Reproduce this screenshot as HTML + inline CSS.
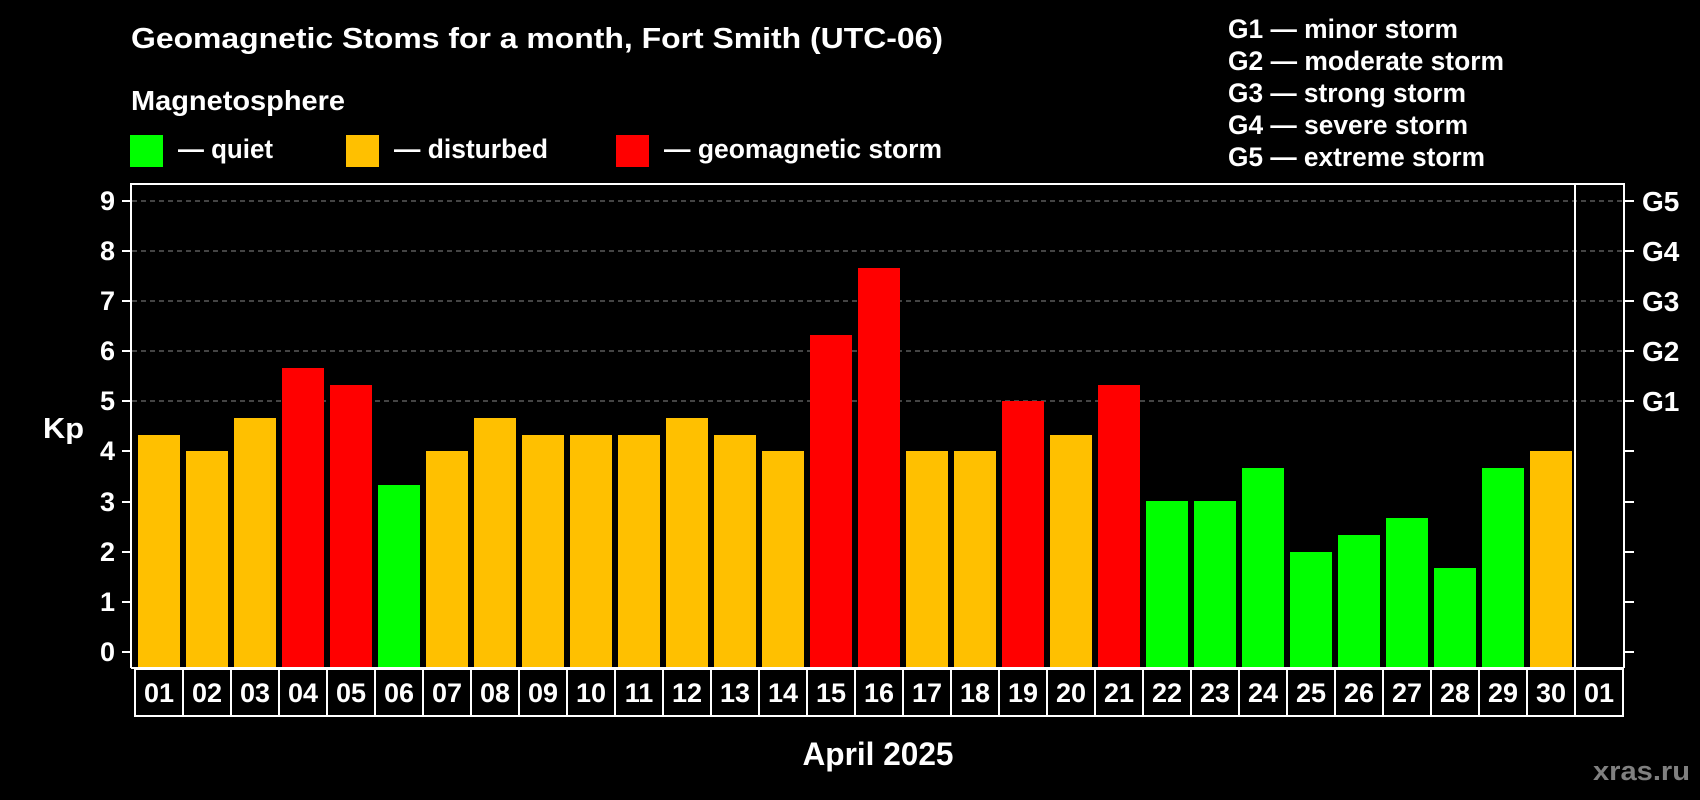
<!DOCTYPE html>
<html><head><meta charset="utf-8"><style>
html,body{margin:0;padding:0;background:#000;}
svg{display:block;}
text{font-family:"Liberation Sans",Arial,sans-serif;font-weight:bold;fill:#fff;}
</style></head><body>
<svg width="1700" height="800" viewBox="0 0 1700 800" xmlns="http://www.w3.org/2000/svg">
<rect width="1700" height="800" fill="#000"/>
<text x="131" y="48" font-size="29" textLength="812" lengthAdjust="spacingAndGlyphs">Geomagnetic Stoms for a month, Fort Smith (UTC-06)</text>
<text x="131" y="110" font-size="28" textLength="214" lengthAdjust="spacingAndGlyphs">Magnetosphere</text>
<rect x="130" y="135" width="33" height="32" fill="#00ff00"/>
<text x="178" y="158" font-size="27" textLength="95" lengthAdjust="spacingAndGlyphs">— quiet</text>
<rect x="346" y="135" width="33" height="32" fill="#ffc000"/>
<text x="394" y="158" font-size="27" textLength="154" lengthAdjust="spacingAndGlyphs">— disturbed</text>
<rect x="616" y="135" width="33" height="32" fill="#ff0000"/>
<text x="664" y="158" font-size="27" textLength="278" lengthAdjust="spacingAndGlyphs">— geomagnetic storm</text>
<g font-size="27">
<text x="1228" y="38" textLength="230" lengthAdjust="spacingAndGlyphs">G1 — minor storm</text>
<text x="1228" y="70" textLength="276" lengthAdjust="spacingAndGlyphs">G2 — moderate storm</text>
<text x="1228" y="102" textLength="238" lengthAdjust="spacingAndGlyphs">G3 — strong storm</text>
<text x="1228" y="134" textLength="240" lengthAdjust="spacingAndGlyphs">G4 — severe storm</text>
<text x="1228" y="166" textLength="257" lengthAdjust="spacingAndGlyphs">G5 — extreme storm</text>
</g>
<g stroke="#888" stroke-width="1" stroke-dasharray="5,4">
<line x1="132" y1="201" x2="1624" y2="201"/>
<line x1="132" y1="251" x2="1624" y2="251"/>
<line x1="132" y1="301" x2="1624" y2="301"/>
<line x1="132" y1="351" x2="1624" y2="351"/>
<line x1="132" y1="401" x2="1624" y2="401"/>
</g>
<g>
<rect x="138" y="435" width="42" height="233" fill="#ffc000"/>
<rect x="186" y="451" width="42" height="217" fill="#ffc000"/>
<rect x="234" y="418" width="42" height="250" fill="#ffc000"/>
<rect x="282" y="368" width="42" height="300" fill="#ff0000"/>
<rect x="330" y="385" width="42" height="283" fill="#ff0000"/>
<rect x="378" y="485" width="42" height="183" fill="#00ff00"/>
<rect x="426" y="451" width="42" height="217" fill="#ffc000"/>
<rect x="474" y="418" width="42" height="250" fill="#ffc000"/>
<rect x="522" y="435" width="42" height="233" fill="#ffc000"/>
<rect x="570" y="435" width="42" height="233" fill="#ffc000"/>
<rect x="618" y="435" width="42" height="233" fill="#ffc000"/>
<rect x="666" y="418" width="42" height="250" fill="#ffc000"/>
<rect x="714" y="435" width="42" height="233" fill="#ffc000"/>
<rect x="762" y="451" width="42" height="217" fill="#ffc000"/>
<rect x="810" y="335" width="42" height="333" fill="#ff0000"/>
<rect x="858" y="268" width="42" height="400" fill="#ff0000"/>
<rect x="906" y="451" width="42" height="217" fill="#ffc000"/>
<rect x="954" y="451" width="42" height="217" fill="#ffc000"/>
<rect x="1002" y="401" width="42" height="267" fill="#ff0000"/>
<rect x="1050" y="435" width="42" height="233" fill="#ffc000"/>
<rect x="1098" y="385" width="42" height="283" fill="#ff0000"/>
<rect x="1146" y="501" width="42" height="167" fill="#00ff00"/>
<rect x="1194" y="501" width="42" height="167" fill="#00ff00"/>
<rect x="1242" y="468" width="42" height="200" fill="#00ff00"/>
<rect x="1290" y="552" width="42" height="116" fill="#00ff00"/>
<rect x="1338" y="535" width="42" height="133" fill="#00ff00"/>
<rect x="1386" y="518" width="42" height="150" fill="#00ff00"/>
<rect x="1434" y="568" width="42" height="100" fill="#00ff00"/>
<rect x="1482" y="468" width="42" height="200" fill="#00ff00"/>
<rect x="1530" y="451" width="42" height="217" fill="#ffc000"/>
</g>
<g stroke="#fff" stroke-width="2" fill="none">
<polyline points="131,668 131,184 1624,184 1624,668"/>
<line x1="1575" y1="184" x2="1575" y2="668"/>
<line x1="131" y1="668" x2="1624" y2="668"/>
<rect x="135" y="669" width="1488" height="47"/>
<path d="M183 669V716M231 669V716M279 669V716M327 669V716M375 669V716M423 669V716M471 669V716M519 669V716M567 669V716M615 669V716M663 669V716M711 669V716M759 669V716M807 669V716M855 669V716M903 669V716M951 669V716M999 669V716M1047 669V716M1095 669V716M1143 669V716M1191 669V716M1239 669V716M1287 669V716M1335 669V716M1383 669V716M1431 669V716M1479 669V716M1527 669V716M1575 669V716"/>
<path d="M122 201H131M122 251H131M122 301H131M122 351H131M122 401H131M122 451H131M122 502H131M122 552H131M122 602H131M122 652H131"/>
<path d="M1624 201H1634M1624 251H1634M1624 301H1634M1624 351H1634M1624 401H1634M1624 451H1634M1624 502H1634M1624 552H1634M1624 602H1634M1624 652H1634"/>
</g>
<g font-size="27" text-anchor="end">
<text x="115" y="210">9</text><text x="115" y="260">8</text><text x="115" y="310">7</text><text x="115" y="360">6</text><text x="115" y="410">5</text>
<text x="115" y="460">4</text><text x="115" y="511">3</text><text x="115" y="561">2</text><text x="115" y="611">1</text><text x="115" y="661">0</text>
</g>
<text x="43" y="438" font-size="29" textLength="41" lengthAdjust="spacingAndGlyphs">Kp</text>
<g font-size="28">
<text x="1642" y="211">G5</text><text x="1642" y="261">G4</text><text x="1642" y="311">G3</text><text x="1642" y="361">G2</text><text x="1642" y="411">G1</text>
</g>
<g font-size="27" text-anchor="middle">
<text x="159" y="702">01</text><text x="207" y="702">02</text><text x="255" y="702">03</text><text x="303" y="702">04</text><text x="351" y="702">05</text>
<text x="399" y="702">06</text><text x="447" y="702">07</text><text x="495" y="702">08</text><text x="543" y="702">09</text><text x="591" y="702">10</text>
<text x="639" y="702">11</text><text x="687" y="702">12</text><text x="735" y="702">13</text><text x="783" y="702">14</text><text x="831" y="702">15</text>
<text x="879" y="702">16</text><text x="927" y="702">17</text><text x="975" y="702">18</text><text x="1023" y="702">19</text><text x="1071" y="702">20</text>
<text x="1119" y="702">21</text><text x="1167" y="702">22</text><text x="1215" y="702">23</text><text x="1263" y="702">24</text><text x="1311" y="702">25</text>
<text x="1359" y="702">26</text><text x="1407" y="702">27</text><text x="1455" y="702">28</text><text x="1503" y="702">29</text><text x="1551" y="702">30</text>
<text x="1599" y="702">01</text>
</g>
<text x="878" y="765" font-size="32" text-anchor="middle" textLength="151" lengthAdjust="spacingAndGlyphs">April 2025</text>
<text x="1593" y="780" font-size="27" style="fill:#808080" textLength="97" lengthAdjust="spacingAndGlyphs">xras.ru</text>
</svg>
</body></html>
